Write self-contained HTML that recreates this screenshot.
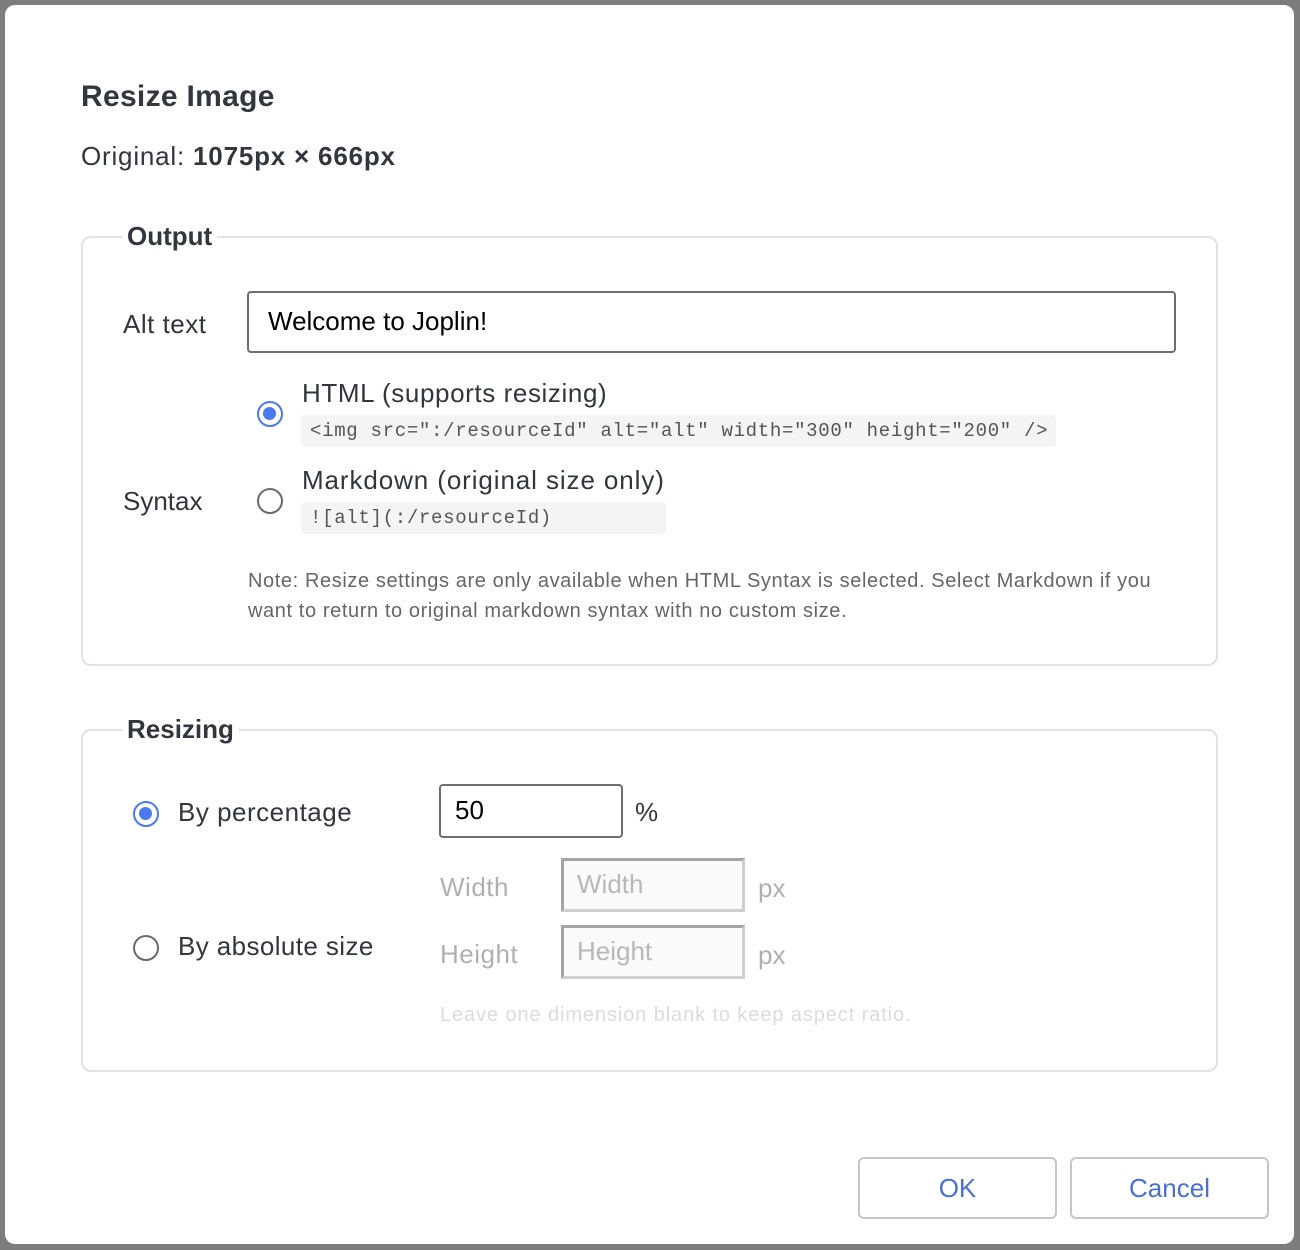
<!DOCTYPE html>
<html><head><meta charset="utf-8"><style>
*{box-sizing:border-box;margin:0;padding:0}
body{width:1300px;height:1250px;background:#7d7d7d;position:relative;overflow:hidden;font-family:"Liberation Sans",sans-serif;color:#32363d}
.dlg{position:absolute;left:5px;top:5px;width:1289px;height:1239px;background:#fff;border-radius:10px}
.a{position:absolute;white-space:nowrap}
.fs{position:absolute;border:2px solid #e2e2e2;border-radius:10px}
.leg{position:absolute;background:#fff;padding:0 5px;font-size:26px;font-weight:bold;color:#32363d}
.code{position:absolute;background:#f4f4f4;border-radius:4px;font-family:"Liberation Mono",monospace;font-size:19px;color:#555;padding:0 9px;height:32px;line-height:32px;white-space:nowrap}
.rad{position:absolute;width:26px;height:26px;border-radius:50%;border:2px solid #6b6b6b}
.rad.on{border:2.5px solid #4a7af0}
.rad.on::after{content:"";position:absolute;left:4px;top:4px;width:13px;height:13px;border-radius:50%;background:#4a7af0}
.dis{position:absolute;width:184px;height:54px;background:#fafafa;border:3px solid;border-color:#a5a5a5 #cfcfcf #cfcfcf #a5a5a5;font-size:26px;color:#b8b8b8;padding-left:13px;line-height:46px}
.btn{position:absolute;top:1157px;width:199px;height:62px;border:2px solid #c6c6c6;border-radius:6px;font-size:26px;color:#4a6fd6;text-align:center;line-height:58px}
</style></head><body>
<div class="dlg"></div>
<div class="a" style="left:81px;top:80px;font-size:30px;font-weight:bold;letter-spacing:0.3px">Resize Image</div>
<div class="a" style="left:81px;top:141px;font-size:26px;letter-spacing:0.8px">Original: <b>1075px × 666px</b></div>

<div class="fs" style="left:81px;top:236px;width:1137px;height:430px"></div>
<div class="leg" style="left:122px;top:221px">Output</div>
<div class="a" style="left:123px;top:309px;font-size:26px;letter-spacing:0.5px">Alt text</div>
<div class="a" style="left:247px;top:291px;width:929px;height:62px;border:2px solid #6f6f6f;border-radius:4px;font-size:26px;color:#000;padding-left:19px;line-height:56px">Welcome to Joplin!</div>
<div class="rad on" style="left:257px;top:401px"></div>
<div class="a" style="left:302px;top:378px;font-size:26px;letter-spacing:0.6px">HTML (supports resizing)</div>
<div class="code" style="left:301px;top:415px;width:755px;letter-spacing:0.7px">&lt;img src=":/resourceId" alt="alt" width="300" height="200" /&gt;</div>
<div class="a" style="left:123px;top:486px;font-size:26px">Syntax</div>
<div class="rad" style="left:257px;top:488px"></div>
<div class="a" style="left:302px;top:465px;font-size:26px;letter-spacing:0.9px">Markdown (original size only)</div>
<div class="code" style="left:301px;top:502px;width:365px;letter-spacing:0.7px">![alt](:/resourceId)</div>
<div class="a" style="left:248px;top:566px;font-size:20px;color:#666;line-height:30px;letter-spacing:0.6px">Note: Resize settings are only available when HTML Syntax is selected. Select Markdown if you<br>want to return to original markdown syntax with no custom size.</div>

<div class="fs" style="left:81px;top:729px;width:1137px;height:343px"></div>
<div class="leg" style="left:122px;top:714px">Resizing</div>
<div class="rad on" style="left:133px;top:801px"></div>
<div class="a" style="left:178px;top:797px;font-size:26px;letter-spacing:0.5px">By percentage</div>
<div class="a" style="left:439px;top:784px;width:184px;height:54px;border:2px solid #6f6f6f;border-radius:4px;font-size:26px;color:#000;padding-left:14px;line-height:48px">50</div>
<div class="a" style="left:635px;top:797px;font-size:26px">%</div>
<div class="a" style="left:440px;top:872px;font-size:26px;color:#b0b0b0;letter-spacing:0.5px">Width</div>
<div class="dis" style="left:561px;top:858px">Width</div>
<div class="a" style="left:758px;top:873px;font-size:26px;color:#b0b0b0">px</div>
<div class="rad" style="left:133px;top:935px"></div>
<div class="a" style="left:178px;top:931px;font-size:26px;letter-spacing:0.4px">By absolute size</div>
<div class="a" style="left:440px;top:939px;font-size:26px;color:#b0b0b0;letter-spacing:0.5px">Height</div>
<div class="dis" style="left:561px;top:925px">Height</div>
<div class="a" style="left:758px;top:940px;font-size:26px;color:#b0b0b0">px</div>
<div class="a" style="left:440px;top:1004px;font-size:20px;color:#dcdcdc;letter-spacing:0.9px">Leave one dimension blank to keep aspect ratio.</div>

<div class="btn" style="left:858px">OK</div>
<div class="btn" style="left:1070px">Cancel</div>
</body></html>
